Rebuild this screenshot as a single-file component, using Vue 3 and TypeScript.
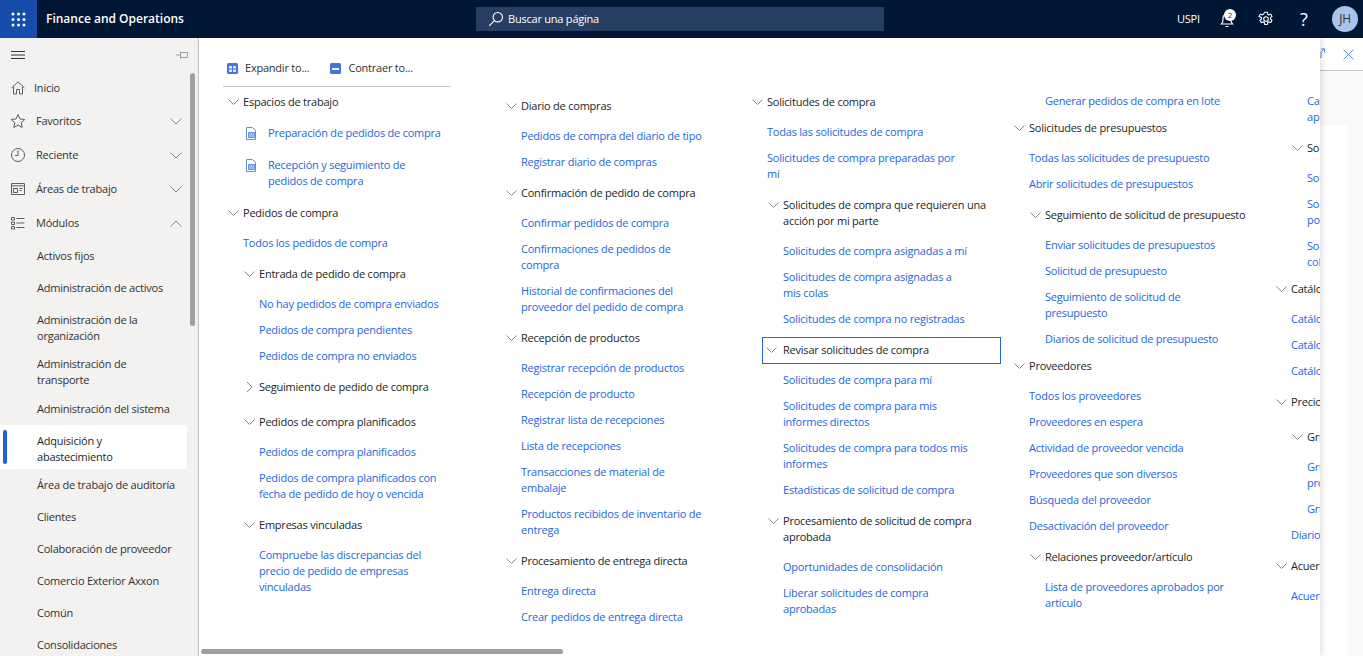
<script setup lang="ts">
type Row = { t: 'h' | 'l' | 'w'; x: string; lv?: number; closed?: boolean; focus?: boolean; up?: boolean; icon?: number };
const h = (x: string, lv = 0, closed = false, focus = false, up = false): Row => ({ t: 'h', x, lv, closed, focus, up });
const l = (x: string, lv = 0): Row => ({ t: 'l', x, lv });

const columns: { cls: string; rows: Row[] }[] = [
  {
    cls: 'c1',
    rows: [
      h('Espacios de trabajo'),
      { t: 'w', x: 'Preparación de pedidos de compra', icon: 1 },
      { t: 'w', x: 'Recepción y seguimiento de pedidos de compra', icon: 2 },
      h('Pedidos de compra'),
      l('Todos los pedidos de compra'),
      h('Entrada de pedido de compra', 1),
      l('No hay pedidos de compra enviados', 1),
      l('Pedidos de compra pendientes', 1),
      l('Pedidos de compra no enviados', 1),
      h('Seguimiento de pedido de compra', 1, true),
      h('Pedidos de compra planificados', 1),
      l('Pedidos de compra planificados', 1),
      l('Pedidos de compra planificados con fecha de pedido de hoy o vencida', 1),
      h('Empresas vinculadas', 1),
      l('Compruebe las discrepancias del precio de pedido de empresas vinculadas', 1),
    ],
  },
  {
    cls: 'c2',
    rows: [
      h('Diario de compras'),
      l('Pedidos de compra del diario de tipo'),
      l('Registrar diario de compras'),
      h('Confirmación de pedido de compra'),
      l('Confirmar pedidos de compra'),
      l('Confirmaciones de pedidos de compra'),
      l('Historial de confirmaciones del proveedor del pedido de compra'),
      h('Recepción de productos'),
      l('Registrar recepción de productos'),
      l('Recepción de producto'),
      l('Registrar lista de recepciones'),
      l('Lista de recepciones'),
      l('Transacciones de material de embalaje'),
      l('Productos recibidos de inventario de entrega'),
      h('Procesamiento de entrega directa'),
      l('Entrega directa'),
      l('Crear pedidos de entrega directa'),
    ],
  },
  {
    cls: 'c3',
    rows: [
      h('Solicitudes de compra'),
      l('Todas las solicitudes de compra'),
      l('Solicitudes de compra preparadas por mí'),
      h('Solicitudes de compra que requieren una acción por mi parte', 1),
      l('Solicitudes de compra asignadas a mí', 1),
      l('Solicitudes de compra asignadas a mis colas', 1),
      l('Solicitudes de compra no registradas', 1),
      h('Revisar solicitudes de compra', 1, false, true),
      l('Solicitudes de compra para mí', 1),
      l('Solicitudes de compra para mis informes directos', 1),
      l('Solicitudes de compra para todos mis informes', 1),
      l('Estadísticas de solicitud de compra', 1),
      h('Procesamiento de solicitud de compra aprobada', 1),
      l('Oportunidades de consolidación', 1),
      l('Liberar solicitudes de compra aprobadas', 1),
    ],
  },
  {
    cls: 'c4',
    rows: [
      l('Generar pedidos de compra en lote', 1),
      h('Solicitudes de presupuestos', 0, false, false, true),
      l('Todas las solicitudes de presupuesto'),
      l('Abrir solicitudes de presupuestos'),
      h('Seguimiento de solicitud de presupuesto', 1),
      l('Enviar solicitudes de presupuestos', 1),
      l('Solicitud de presupuesto', 1),
      l('Seguimiento de solicitud de presupuesto', 1),
      l('Diarios de solicitud de presupuesto', 1),
      h('Proveedores', 0, false, false, true),
      l('Todos los proveedores'),
      l('Proveedores en espera'),
      l('Actividad de proveedor vencida'),
      l('Proveedores que son diversos'),
      l('Búsqueda del proveedor'),
      l('Desactivación del proveedor'),
      h('Relaciones proveedor/artículo', 1),
      l('Lista de proveedores aprobados por artículo', 1),
    ],
  },
  {
    cls: 'c5',
    rows: [
      l('Cambiar solicitudes de compra aprobadas', 1),
      h('Solicitudes de compra', 1),
      l('Solicitudes', 1),
      l('Solicitudes de compra no aprobadas por mí', 1),
      l('Solicitudes de compra en espera de colaboración', 1),
      h('Catálogos', 0, false, false, true),
      l('Catálogos'),
      l('Catálogos externos'),
      l('Catálogos de compras'),
      h('Precios y descuentos'),
      h('Grupos de precios', 1),
      l('Grupos de descuentos de artículos de proveedor', 1),
      l('Grupos de descuentos', 1),
      l('Diarios de precios'),
      h('Acuerdos de compra'),
      l('Acuerdos de compra'),
    ],
  },
];

const nav = [
  { x: 'Inicio', i: 'home', first: true },
  { x: 'Favoritos', i: 'star', c: 'down' },
  { x: 'Reciente', i: 'clock', c: 'down' },
  { x: 'Áreas de trabajo', i: 'work', c: 'down' },
  { x: 'Módulos', i: 'mods', c: 'up' },
];
const modules = [
  { x: 'Activos fijos' },
  { x: 'Administración de activos' },
  { x: 'Administración de la organización', two: true },
  { x: 'Administración de transporte', two: true },
  { x: 'Administración del sistema', nudge: true },
  { x: 'Adquisición y abastecimiento', two: true, active: true },
  { x: 'Área de trabajo de auditoría' },
  { x: 'Clientes' },
  { x: 'Colaboración de proveedor' },
  { x: 'Comercio Exterior Axxon' },
  { x: 'Común' },
  { x: 'Consolidaciones' },
];
const waffle = [5, 10.5, 16].flatMap((y) => [5, 10.5, 16].map((x) => ({ x, y })));
</script>

<template>
  <div class="app">
    <header class="top">
      <div class="waffle">
        <svg width="21" height="21" viewBox="0 0 21 21"><circle v-for="(d, i) in waffle" :key="i" :cx="d.x" :cy="d.y" r="1.5" fill="#fff" /></svg>
      </div>
      <div class="brand">Finance and Operations</div>
      <div class="search">
        <svg width="16" height="16" viewBox="0 0 16 16" fill="none" stroke="#fff" stroke-width="1.1"><circle cx="9.8" cy="6.2" r="4.7" /><path d="M6.4 9.6 1.2 14.8" /></svg>
        <span>Buscar una página</span>
      </div>
      <div class="tools">
        <span class="co">USPI</span>
        <span class="bell">
          <svg width="16" height="16" viewBox="0 0 16 16" fill="none" stroke="#fff" stroke-width="1.2"><path d="M2.500 12h11c-1.200-1.200-1.500-2.400-1.500-4.500V6a4 4 0 0 0-8 0v1.500C4 9.600 3.700 10.800 2.500 12ZM6.500 14.500h3" /></svg>
          <b>2</b>
        </span>
        <svg class="gear" width="16" height="16" viewBox="0 0 16 16" fill="none" stroke="#fff" stroke-width="1.1"><circle cx="8" cy="8" r="2.300" /><path d="M6.700 1.200h2.600l.4 2 1.100.6 1.900-.7 1.300 2.300-1.500 1.300v1.300l1.500 1.300-1.300 2.300-1.900-.7-1.100.6-.4 2H6.700l-.4-2-1.100-.6-1.900.7-1.300-2.300 1.500-1.300V6.700L1 5.400l1.300-2.300 1.900.7 1.100-.6Z" /></svg>
        <span class="help">?</span>
        <span class="avatar">JH</span>
      </div>
    </header>

    <div class="body">
      <aside class="side">
        <div class="side-top">
          <svg width="14" height="8" viewBox="0 0 14 8" stroke="#323130"><path d="M0 .5h14M0 4h14M0 7.500h14" /></svg>
          <svg width="12" height="8" viewBox="0 0 12 8" fill="none" stroke="#a19f9d"><path d="M0 4h4M4.500 1.500h7v5h-7Z" /><path d="M4.500 .5v7" /></svg>
        </div>
        <div class="thumb"></div>
        <div v-for="n in nav" :key="n.x" class="nav" :class="{ first: n.first }">
          <svg class="ni" width="16" height="16" viewBox="0 0 16 16" fill="none" stroke="#605e5c">
            <path v-if="n.i === 'home'" d="M1.500 8 8 1.800 14.500 8M3.500 6.500v7.500h3v-4.500h3V14h3V6.500" />
            <path v-else-if="n.i === 'star'" d="m8 1.500 2 4.500 4.800.5-3.600 3.200 1 4.800L8 12.100l-4.200 2.400 1-4.800L1.200 6.500 6 6Z" />
            <template v-else-if="n.i === 'clock'"><circle cx="8" cy="8" r="6.500" /><path d="M8 3.500V8.500H5" /></template>
            <path v-else-if="n.i === 'work'" d="M1.500 2.500h13v11h-13ZM1.500 4.800h13M3.500 7.500h4v4h-4ZM9.500 7.500h3M9.500 9.500h2" />
            <path v-else d="M1.500 2.500h3v2.500h-3ZM1.500 7h3v2.500h-3ZM1.500 11.500h3V14h-3ZM6.500 3.500h8M6.500 8h8M6.500 12.500h8" />
          </svg>
          <span>{{ n.x }}</span>
          <svg v-if="n.c" class="nc" :class="{ up: n.c === 'up' }" width="12" height="7" viewBox="0 0 12 7" fill="none" stroke="#8a8886"><path d="m.5.500 5.500 5.500 5.500-5.500" /></svg>
        </div>
        <div
          v-for="m in modules"
          :key="m.x"
          class="mod"
          :class="{ two: m.two, active: m.active, nudge: m.nudge }"
        >
          <span>{{ m.x }}</span>
        </div>
      </aside>

      <main class="work">
        <div class="work-bar">
          <svg width="10" height="10" viewBox="0 0 10 10" fill="none" stroke="#5b8ae6" class="pop"><path d="M0 9.500h6V4M6 1h3.500v3.500M9.500 .5l-4 4" /></svg>
          <svg width="11" height="11" viewBox="0 0 11 11" stroke="#5b8ae6" class="x"><path d="m.5.500 10 10M10.500.500l-10 10" /></svg>
        </div>
        <div class="work-body"><div class="work-card"></div></div>
      </main>

      <section class="panel">
        <div class="toolbar">
          <div class="tb">
            <svg width="11" height="11" viewBox="0 0 11 11"><rect width="11" height="11" rx="1.500" fill="#3f73dd" /><path d="M2 3h7v6H2Z" fill="#dfe8fa" /><path d="M5.500 3v6M2 6h7" stroke="#3f73dd" /></svg>
            <span>Expandir to...</span>
          </div>
          <div class="tb">
            <svg width="11" height="11" viewBox="0 0 11 11"><rect width="11" height="11" rx="1.500" fill="#3f73dd" /><path d="M2 5h7v2H2Z" fill="#fff" /></svg>
            <span>Contraer to...</span>
          </div>
        </div>
        <div class="cols">
          <div v-for="c in columns" :key="c.cls" class="col" :class="c.cls">
            <template v-for="(r, i) in c.rows" :key="i">
              <div v-if="r.t === 'h'" class="head" :class="['lv' + r.lv, { focus: r.focus, closed: r.closed, up: r.up }]">
                <svg class="chev" width="11" height="6" viewBox="0 0 11 6" fill="none" stroke="#8a8886"><path d="m.5.500 5 5 5-5" /></svg>
                <span>{{ r.x }}</span>
              </div>
              <div v-else-if="r.t === 'w'" class="wlink" :class="'w' + r.icon">
                <svg width="11" height="13" viewBox="0 0 11 13" fill="none" stroke="#5f8fe6"><path d="M.5.500h6l3 3v9h-9Z" /><path d="M2.500 5.500h6v5h-6Z" fill="#9dbbf0" /></svg>
                <a>{{ r.x }}</a>
              </div>
              <div v-else class="link" :class="'lv' + r.lv"><a>{{ r.x }}</a></div>
            </template>
          </div>
        </div>
        <div class="hbar"></div>
      </section>
    </div>
  </div>
</template>

<style>
html, body { margin: 0; overflow: hidden; }
</style>

<style scoped>
.app { width: 1363px; height: 656px; overflow: hidden; font-family: "Open Sans", "Noto Sans", sans-serif; font-size: 11px; letter-spacing: -.22px; line-height: 16px; color: #323130; background: #faf9f8; }
.top { height: 38px; background: #001635; color: #fff; display: flex; align-items: center; }
.waffle { width: 37px; height: 38px; background: #164dab; display: flex; align-items: center; justify-content: center; }
.brand { margin-left: 9px; width: 430px; font-weight: 600; font-size: 12px; letter-spacing: 0; }
.search { width: 408px; height: 24px; background: #283f63; display: flex; align-items: center; gap: 4px; padding-left: 12px; box-sizing: border-box; }
.tools { margin-left: auto; display: flex; align-items: center; height: 38px; position: relative; width: 187px; }
.co { position: absolute; left: 1px; }
.bell { position: absolute; left: 43px; top: 12px; width: 16px; height: 16px; }
.bell b { position: absolute; left: 5px; top: -3px; width: 12px; height: 12px; border-radius: 50%; background: #fff; color: #323130; font: 400 8px/12px "Open Sans", sans-serif; text-align: center; }
.gear { position: absolute; left: 82px; top: 11px; }
.help { position: absolute; left: 124px; font-size: 18px; }
.avatar { position: absolute; left: 156px; top: 6px; width: 26px; height: 26px; border-radius: 50%; background: #a9c4ec; color: #323130; font-size: 12px; line-height: 26px; text-align: center; }

.body { display: flex; height: 618px; position: relative; }
.side { width: 198px; height: 618px; flex: none; background: #f3f2f1; border-right: 1px solid #c8c6c4; overflow: hidden; position: relative; }
.side-top { height: 33px; display: flex; justify-content: space-between; align-items: center; padding: 0 10px 0 11px; }
.thumb { position: absolute; left: 190px; top: 35px; width: 5px; height: 253px; border-radius: 3px; background: #a19f9d; }
.nav { height: 34px; display: flex; align-items: center; padding: 0 16px 0 10px; width: 172px; position: relative; }
.nav.first { height: 33px; }
.nav.first .ni { margin-right: 8px; }
.ni { flex: none; margin-right: 10px; }
.nc { margin-left: auto; }
.nc.up { transform: rotate(180deg); }
.mod { padding: 8px 10px 8px 37px; width: 140px; }
.mod.two { padding-bottom: 4px; }
.mod.nudge { padding-top: 9px; }
.mod.active { position: relative; background: #fff; font-weight: 500; color: #201f1e; }
.mod.active::before { content: ""; position: absolute; left: 3px; top: 5px; bottom: 5px; width: 4px; border-radius: 2px; background: #1f5fd8; }

.work { flex: 1; background: #faf9f8; }
.work-bar { height: 32px; background: #fff; border-bottom: 1px solid #c8c6c4; position: relative; }
.pop { position: absolute; right: 38px; top: 10px; }
.x { position: absolute; right: 9px; top: 11px; }
.work-body { padding-top: 54px; }
.work-card { margin-left: 1042px; width: 107px; height: 540px; background: #fff; }

.panel { position: absolute; left: 199px; top: 0; width: 1121px; height: 618px; background: #fff; box-shadow: 2px 0 6px rgba(0, 0, 0, .13); overflow: hidden; }
.toolbar { position: relative; margin: 0 870px 0 24px; height: 48px; border-bottom: 1px solid #c8c6c4; display: flex; align-items: center; gap: 21px; padding-left: 4px; }
.tb { display: flex; align-items: center; gap: 7px; color: #323130; padding-top: 12px; }
.cols { display: flex; align-items: flex-start; padding-left: 29px; margin-top: -3px; }
.col { flex: none; }
.c1 { width: 278px; }
.c2 { width: 246px; padding-top: 4px; }
.c3 { width: 262px; }
.c4 { width: 262px; margin-top: 4px; }
.c5 { width: 200px; margin-top: 4px; }
.head { position: relative; padding: 10px 0 9px 15px; color: #201f1e; width: 215px; }
.head.lv1 { margin-left: 16px; }
.head.up { margin-top: -4px; }
.chev { position: absolute; left: 0; top: 15px; }
.head.closed .chev { transform: rotate(-90deg); }
.head.focus { border: 1px solid #1f66e5; margin-left: 10px; padding: 4px 0 5px 20px; width: 217px; margin-top: 5px; margin-bottom: 3px; }
.head.focus .chev { left: 3px; top: 9px; }
.link { padding: 5px 0 5px 15px; color: #2266e3; width: 218px; box-sizing: border-box; }
.c2 .link { width: 202px; }
.c3 .link { width: 216px; }
.link.lv1 { padding-left: 31px; }
.wlink { display: flex; padding: 6px 0 8px 15px; color: #2266e3; gap: 11px; width: 215px; box-sizing: border-box; }
.wlink svg { flex: none; margin: 2px 0 0 3px; }
.w2 { padding: 8px 0 6px 15px; }
.hbar { position: absolute; left: 2px; bottom: 2px; width: 362px; height: 5px; border-radius: 3px; background: #a19f9d; }
</style>
